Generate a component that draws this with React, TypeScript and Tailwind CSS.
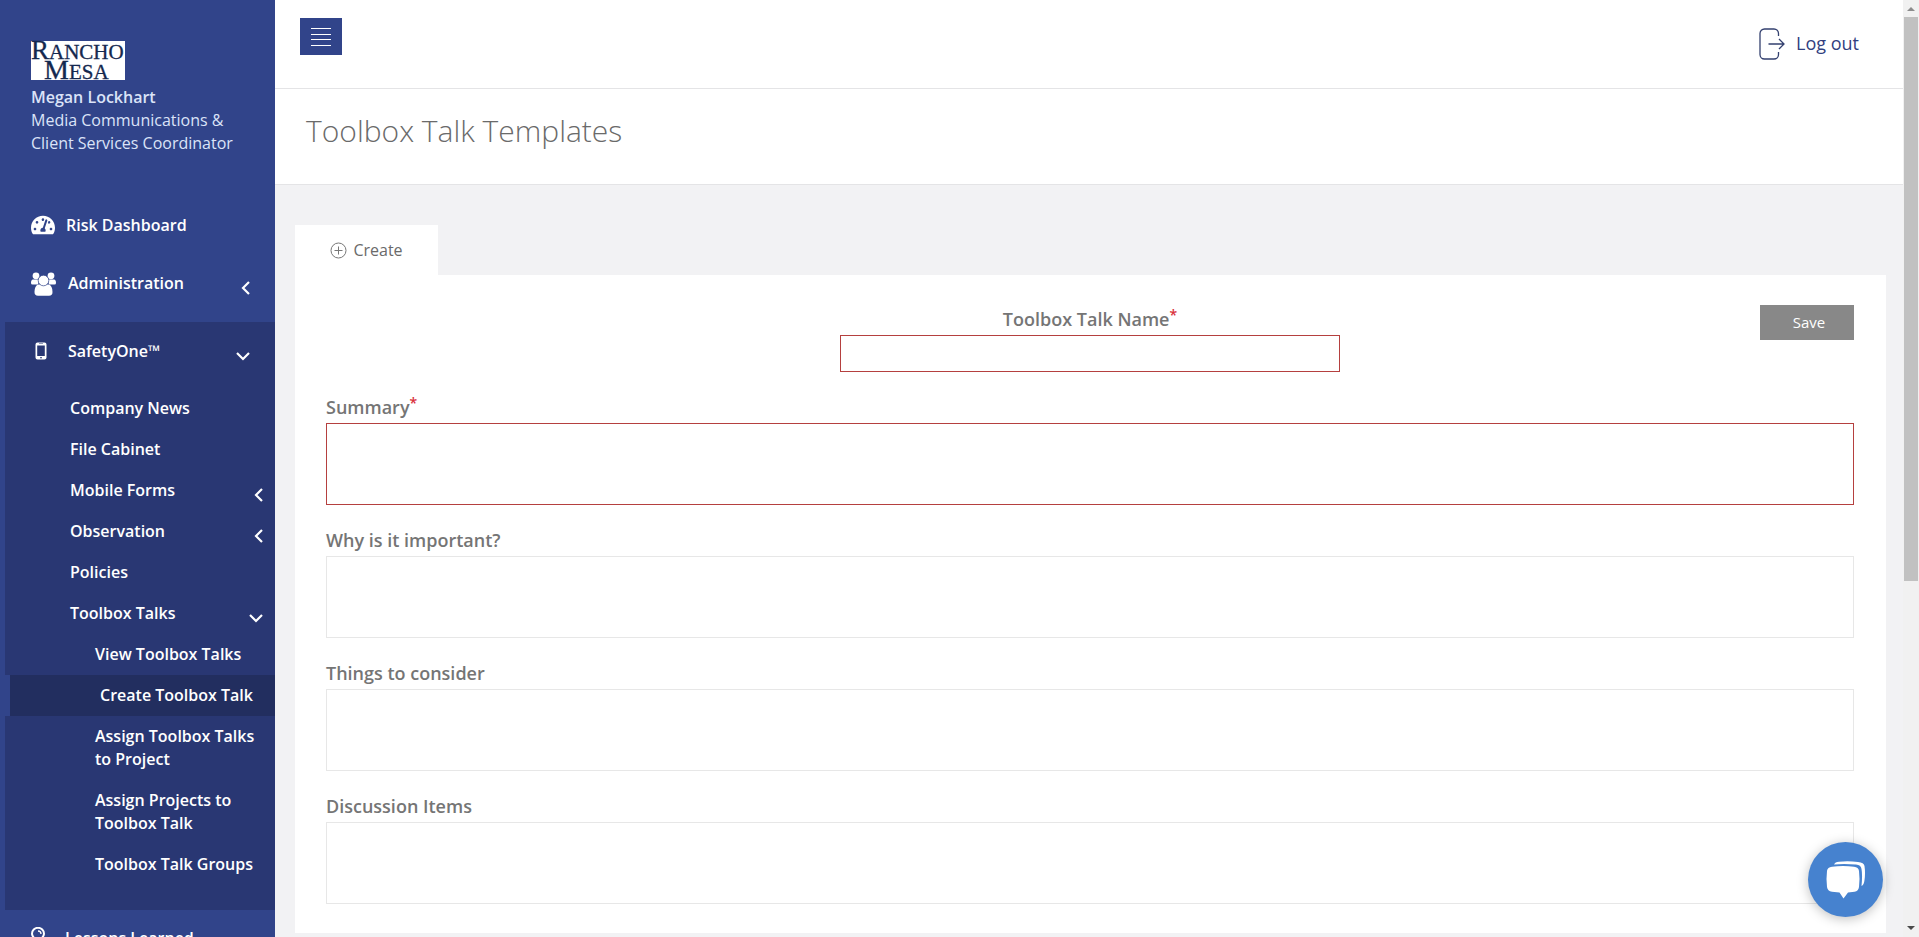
import React from "react";
import { FaTachometerAlt } from "react-icons/fa";

type IconProps = { className?: string };

function Logo() {
  return (
    <svg viewBox="0 0 94 39" className="h-[39px] w-[94px] overflow-visible bg-white" role="img" aria-label="Rancho Mesa">
      <g fill="#14284f" stroke="#14284f" strokeWidth="0.3" fontFamily="'Liberation Serif', serif">
        <text x="0" y="18" fontSize="21">
          <tspan fontSize="27">R</tspan>ANCHO
        </text>
        <text x="13" y="38" fontSize="21">
          <tspan fontSize="28">M</tspan>ESA
        </text>
      </g>
    </svg>
  );
}

function UsersIcon({ className }: IconProps) {
  return (
    <svg viewBox="0 0 25 24" className={className} fill="#fff" aria-hidden="true">
      <circle cx="5" cy="3.8" r="3.4" />
      <circle cx="20" cy="3.8" r="3.4" />
      <path d="M2 7.500h6l-1 5H1.500Q0 12.500 0 11Q0 7.500 2 7.500Z" />
      <path d="M23 7.500h-6l1 5h5.500q1.500 0 1.500-1.500q0-3.500-2-3.500Z" />
      <path d="M7.500 12.500Q3.500 13.500 3.500 20Q3.500 23.800 7 23.800H18Q21.500 23.800 21.500 20Q21.500 13.500 17.500 12.500Z" />
      <circle cx="12.500" cy="8.500" r="5.300" stroke="#31448a" strokeWidth="0.700" />
    </svg>
  );
}

function PhoneIcon({ className }: IconProps) {
  return (
    <svg viewBox="0 0 12 18" className={className} aria-hidden="true">
      <path
        fill="#fff"
        fillRule="evenodd"
        d="M2.500 0.500h7a2 2 0 0 1 2 2v13a2 2 0 0 1-2 2h-7a2 2 0 0 1-2-2v-13a2 2 0 0 1 2-2ZM2.200 3.500v10.500h7.600V3.500ZM5 15.300v1h2v-1ZM4 1.500v.600h4v-.600Z"
      />
    </svg>
  );
}

function Chevron({ open }: { open?: boolean }) {
  return (
    <svg
      viewBox="0 0 14 14"
      className="mt-[9px] size-[14px] shrink-0"
      fill="none"
      stroke="#fff"
      strokeWidth="2.200"
      aria-hidden="true"
    >
      {open ? <path d="M1 4l6 6 6-6" /> : <path d="M11 1l-6 6 6 6" />}
    </svg>
  );
}

function Sidebar() {
  return (
    <aside className="w-[275px] shrink-0 overflow-hidden bg-[#31448a] text-base leading-[23px] text-white">
      <div className="px-[31px] pt-[41px] text-[#dbe3f8]">
        <Logo />
        <p className="mt-[6px] font-semibold">Megan Lockhart</p>
        <p>
          Media Communications &amp;
          <br />
          Client Services Coordinator
        </p>
      </div>
      <nav className="mt-[49px] font-semibold">
        <a href="#risk" className="flex items-center py-[9px] pl-[31px]">
          <FaTachometerAlt className="mr-[11px] size-6" />
          Risk Dashboard
        </a>
        <a href="#admin" className="mt-[17px] flex py-[9px] pr-[23px] pl-[31px]">
          <UsersIcon className="mr-3 h-6 w-[25px]" />
          <span className="flex-1">Administration</span>
          <Chevron />
        </a>
        <div className="mt-[17px] ml-[5px] bg-[#293773] pt-[9px] pb-[25px]">
          <a href="#safetyone" className="flex py-[9px] pr-[25px] pl-[30px]">
            <PhoneIcon className="mt-[2px] mr-[21px] h-[18px] w-[12px]" />
            <span className="flex-1">SafetyOne™</span>
            <Chevron open />
          </a>
          <ul className="mt-[16px]">
            <li><a href="#news" className="block py-[9px] pl-[65px]">Company News</a></li>
            <li><a href="#files" className="block py-[9px] pl-[65px]">File Cabinet</a></li>
            <li>
              <a href="#forms" className="flex py-[9px] pr-[10px] pl-[65px]">
                <span className="flex-1">Mobile Forms</span>
                <Chevron />
              </a>
            </li>
            <li>
              <a href="#observation" className="flex py-[9px] pr-[10px] pl-[65px]">
                <span className="flex-1">Observation</span>
                <Chevron />
              </a>
            </li>
            <li><a href="#policies" className="block py-[9px] pl-[65px]">Policies</a></li>
            <li>
              <a href="#talks" className="flex py-[9px] pr-[12px] pl-[65px]">
                <span className="flex-1">Toolbox Talks</span>
                <Chevron open />
              </a>
              <ul>
                <li><a href="#view" className="block py-[9px] pl-[90px]">View Toolbox Talks</a></li>
                <li className="border-l-[5px] border-[#31448a] bg-[#222e5f]">
                  <a href="#create" className="block py-[9px] pl-[90px]">Create Toolbox Talk</a>
                </li>
                <li><a href="#assign-talks" className="block py-[9px] pr-3 pl-[90px]">Assign Toolbox Talks to Project</a></li>
                <li><a href="#assign-projects" className="block py-[9px] pr-8 pl-[90px]">Assign Projects to Toolbox Talk</a></li>
                <li><a href="#groups" className="block py-[9px] pl-[90px]">Toolbox Talk Groups</a></li>
              </ul>
            </li>
          </ul>
        </div>
        <a href="#lessons" className="mt-[8px] flex py-[9px] pl-[31px]">
          <svg viewBox="0 0 14 20" className="mr-[20px] h-5 w-[14px]" fill="none" stroke="#fff" strokeWidth="2" aria-hidden="true">
            <path d="M4.500 13.500C4 11 1 10 1 6.800a6 6 0 0 1 12 0C13 10 10 11 9.500 13.500ZM5 16.500h4" />
            <path d="M7 4a3 3 0 0 1 3 3" strokeWidth="1.300" />
          </svg>
          Lessons Learned
        </a>
      </nav>
    </aside>
  );
}

function Label({ htmlFor, required, children }: { htmlFor: string; required?: boolean; children: React.ReactNode }) {
  return (
    <label htmlFor={htmlFor} className="mb-[3px] flex text-lg leading-[26px] font-semibold text-[#757575]">
      {children}
      {required && <span className="-mt-1 text-sm leading-[26px] text-[#d9303a]">*</span>}
    </label>
  );
}

const areas = [
  { id: "why", label: "Why is it important?" },
  { id: "consider", label: "Things to consider" },
  { id: "discussion", label: "Discussion Items" },
];

function TemplateForm() {
  return (
    <form className="bg-white pt-[30px] pr-[32px] pb-[29px] pl-[31px]">
      <div className="grid grid-cols-[1fr_500px_1fr] items-start">
        <div />
        <div className="flex flex-col items-center pt-px">
          <Label htmlFor="name" required>Toolbox Talk Name</Label>
          <input id="name" type="text" className="h-[37px] w-full border border-[#b5403f] px-3" />
        </div>
        <button type="button" className="h-[35px] w-[94px] justify-self-end bg-[#888888] pl-[4px] text-[15px] text-white">
          Save
        </button>
      </div>
      <div className="mt-[22px]">
        <Label htmlFor="summary" required>Summary</Label>
        <textarea id="summary" className="block h-[82px] w-full resize-none border border-[#b5403f] p-3" />
      </div>
      {areas.map((a) => (
        <div key={a.id} className="mt-[22px]">
          <Label htmlFor={a.id}>{a.label}</Label>
          <textarea id={a.id} className="block h-[82px] w-full resize-none border border-[#e7e7e7] p-3" />
        </div>
      ))}
    </form>
  );
}

function ScrollTrack() {
  return (
    <div className="flex w-[16px] shrink-0 flex-col items-center bg-[#f1f1f1]" aria-hidden="true">
      <svg viewBox="0 0 16 17" className="h-[17px] w-4" fill="#8c8c8c"><path d="M4 11l4-4 4 4Z" /></svg>
      <div className="flex-1 self-stretch px-[1px]">
        <div className="h-5/8 bg-[#c1c1c1]" />
      </div>
      <svg viewBox="0 0 16 17" className="h-[17px] w-4" fill="#4a4a4a"><path d="M4 6l4 4 4-4Z" /></svg>
    </div>
  );
}

export default function App() {
  return (
    <div className="flex h-screen overflow-hidden bg-[#f2f2f4] font-['Open_Sans',sans-serif]">
      <Sidebar />
      <main className="min-w-0 flex-1 overflow-hidden">
        <header className="flex h-[89px] items-start justify-between border-b border-[#e4e4e6] bg-white pr-[44px] pl-[25px]">
          <button type="button" aria-label="Toggle menu" className="mt-[18px] flex h-[37px] w-[42px] items-center justify-center bg-[#31448a]">
            <svg viewBox="0 0 20 20" className="size-5" stroke="#fff" strokeWidth="1" aria-hidden="true">
              <path d="M0 1.500h20M0 7.500h20M0 12.500h20M0 18.500h20" />
            </svg>
          </button>
          <a href="#logout" className="mt-[28px] flex items-start text-lg leading-[30px] font-medium text-[#31407f]">
            <svg viewBox="0 0 26 32" className="mr-[11px] h-8 w-[26px]" fill="none" stroke="#33406f" strokeWidth="1.300" aria-hidden="true">
              <path d="M19.500 8V5.500a4.500 4.500 0 0 0-4.500-4.500H5.500A4.500 4.500 0 0 0 1 5.500v21A4.500 4.500 0 0 0 5.500 31H15a4.500 4.500 0 0 0 4.500-4.500V24M9.500 16H25M20 11l5 5-5 5" />
            </svg>
            Log out
          </a>
        </header>
        <div className="h-[96px] border-b border-[#e4e4e6] bg-white pt-[21px] pl-[31px]">
          <h1 className="text-3xl leading-[42px] font-light text-[#6a6a6a]">Toolbox Talk Templates</h1>
        </div>
        <div className="pt-[40px] pr-[17px] pl-[20px]">
          <button type="button" className="flex h-[50px] w-[143px] items-center justify-center gap-[6px] bg-white text-base text-[#6a6a6a]">
            <svg viewBox="0 0 17 17" className="size-[17px]" fill="none" stroke="#777" aria-hidden="true">
              <circle cx="8.500" cy="8.500" r="7.500" />
              <path d="M8.500 4.500v8M4.500 8.500h8" />
            </svg>
            Create
          </button>
          <TemplateForm />
        </div>
      </main>
      <ScrollTrack />
      <button
        type="button"
        aria-label="Open chat"
        className="fixed right-[36px] bottom-[20px] flex size-[75px] items-center justify-center rounded-full bg-[#4682cf] shadow-[0_2px_12px_rgba(0,0,0,0.25)]"
      >
        <svg viewBox="0 0 40 38" className="h-[38px] w-[40px]" fill="#fff" aria-hidden="true">
          <path d="M8 3.500Q9 1 13 .700Q22-.200 32 .900Q38 1.300 38.500 5Q39.500 12 38.500 19Q38 24 35.500 25Q36.600 14 35.500 8Q35 4 30 3.600Q18 2.300 8 3.500Z" />
          <path d="M6 5.800Q17 4.300 28 5.800Q32.500 6.300 33 10Q34 18 33 26Q32.500 30 28.500 30.700L22 31.400L17.500 37.500L13.500 31.400L6 30.700Q1.500 30 1 26Q0 18 1 10Q1.500 6.300 6 5.800Z" />
        </svg>
      </button>
    </div>
  );
}
